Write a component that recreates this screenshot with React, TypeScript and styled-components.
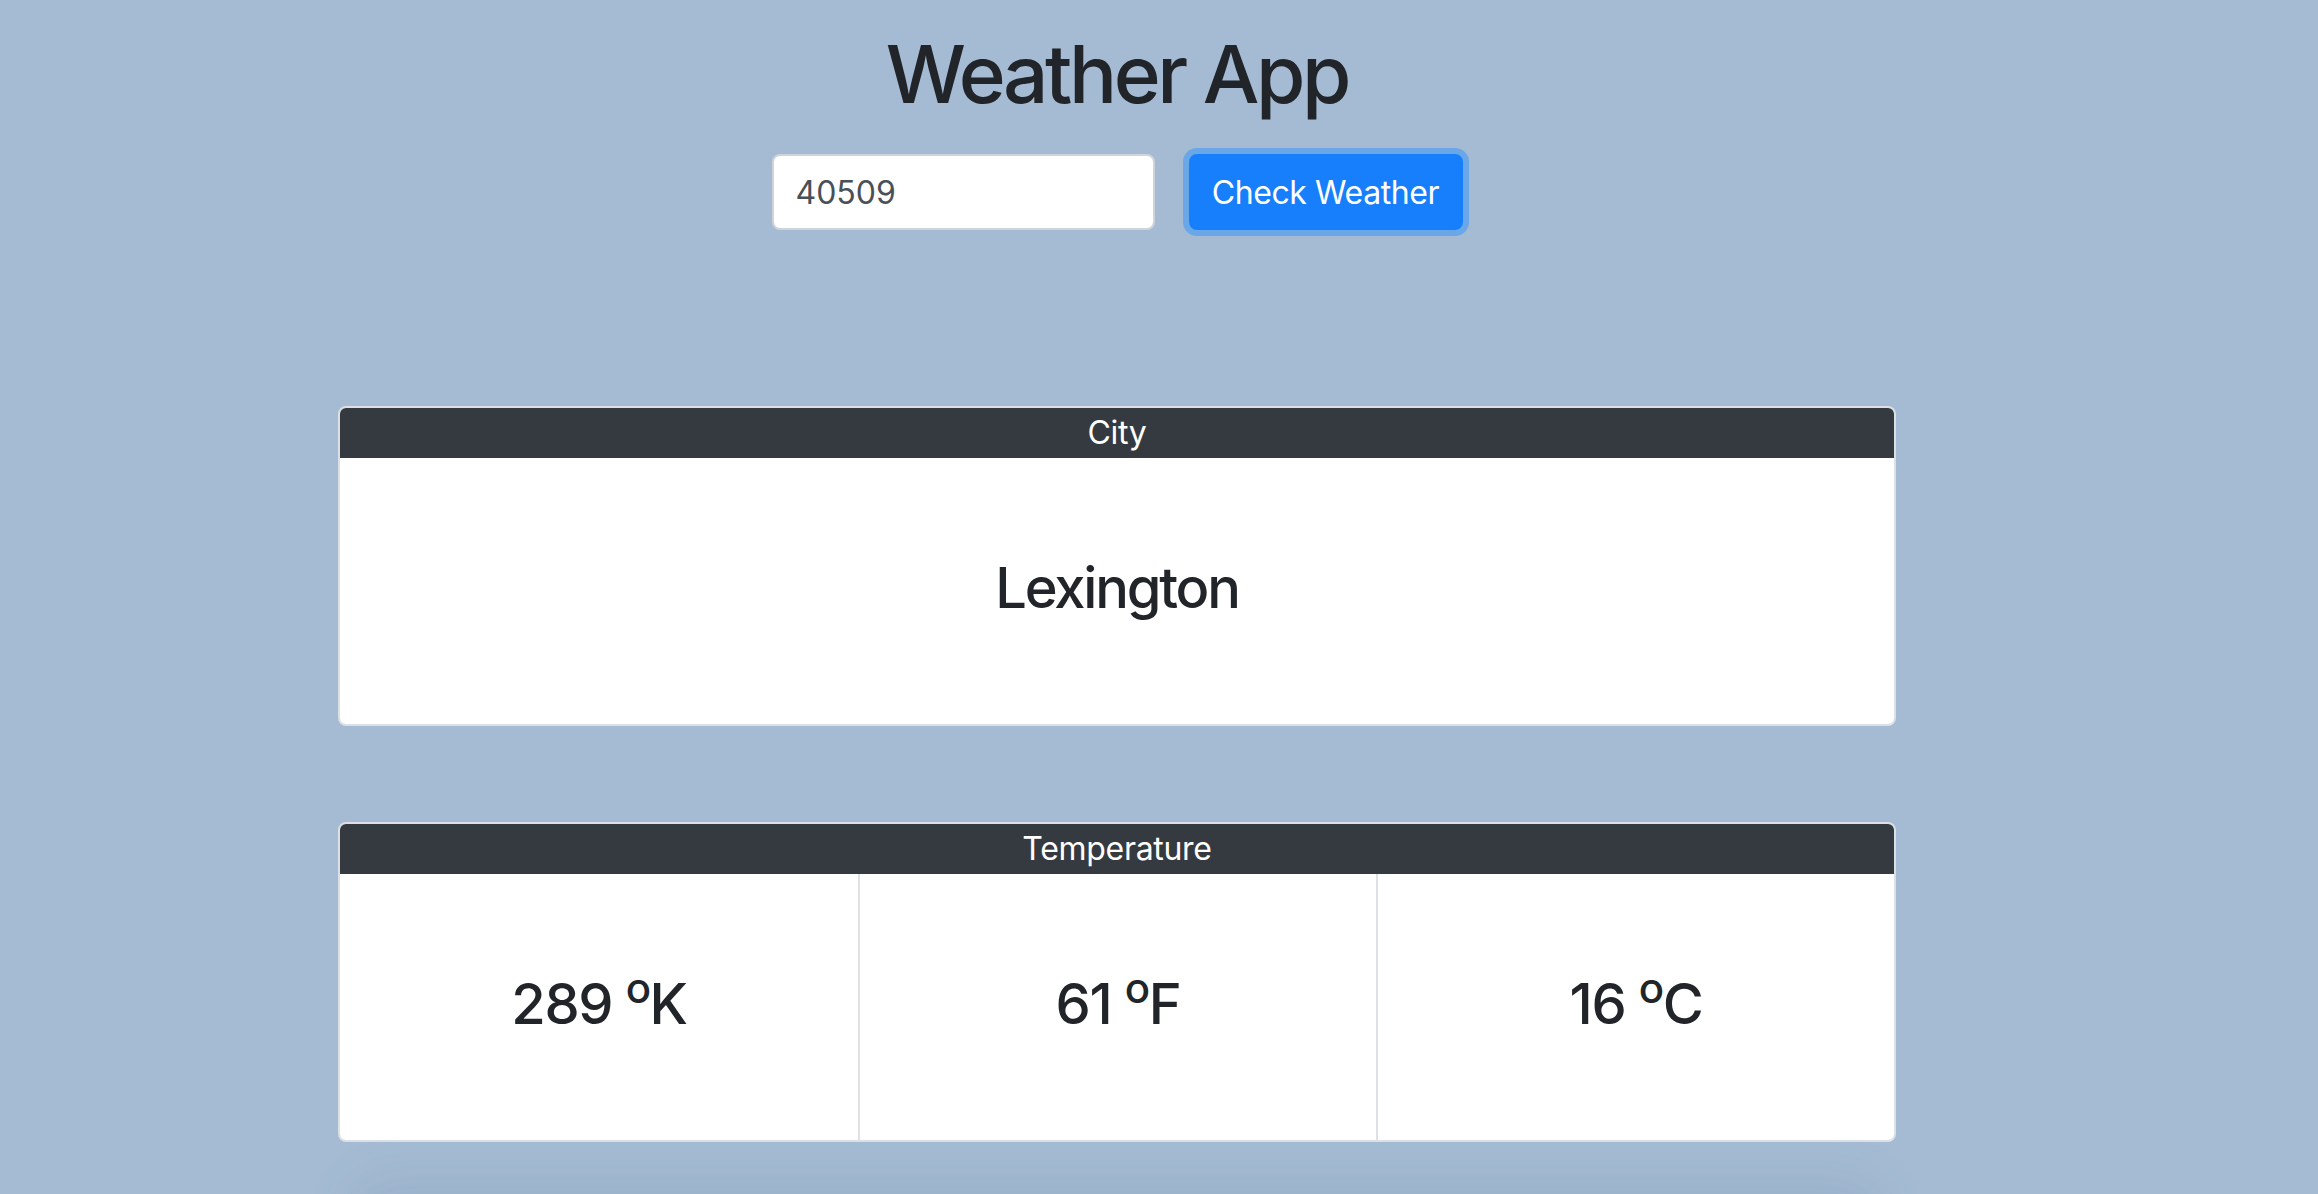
import React from "react";
import styled, { createGlobalStyle } from "styled-components";

const GlobalStyle = createGlobalStyle`
  html, body {
    margin: 0;
    padding: 0;
    overflow: hidden;
    background: #a4bbd3;
  }
  body {
    font-family: Inter, "Noto Sans", "Liberation Sans", sans-serif;
    color: #212529;
  }
  * { box-sizing: border-box; }
`;

const Page = styled.div`
  width: 2234px;
  height: 1194px;
  overflow: hidden;
  padding-top: 26px;
  display: flex;
  flex-direction: column;
  align-items: center;
`;

const Title = styled.h1`
  margin: 0;
  font-size: 80px;
  line-height: 96px;
  font-weight: 500;
  letter-spacing: -3.4px;
  text-align: center;
  color: #212529;
`;

const SearchForm = styled.form`
  margin-top: 32px;
  display: flex;
  align-items: center;
  gap: 34px;
`;

const ZipInput = styled.input`
  width: 383px;
  height: 76px;
  padding: 0 22px;
  border: 2px solid #ced4da;
  border-radius: 8px;
  background: #ffffff;
  font-family: inherit;
  font-size: 32px;
  color: #495057;
  outline: none;
`;

const SubmitButton = styled.button`
  width: 274px;
  height: 76px;
  padding: 0;
  border: 2px solid #177ffb;
  border-radius: 8px;
  background: #177ffb;
  color: #ffffff;
  font-family: inherit;
  font-size: 32px;
  font-weight: 400;
  letter-spacing: -0.4px;
  box-shadow: 0 0 0 6px #6aa7e8;
  cursor: pointer;
`;

const Cards = styled.div`
  margin-top: 176px;
  display: flex;
  flex-direction: column;
  gap: 96px;
`;

const Card = styled.section<{ $shadow?: boolean }>`
  position: relative;
  width: 1558px;
  border: 2px solid #dcdfe3;
  border-radius: 8px;
  background: #ffffff;

  ${(p) =>
    p.$shadow &&
    `
    &::after {
      content: "";
      position: absolute;
      left: 10px;
      right: 10px;
      top: calc(100% + 40px);
      height: 160px;
      background: rgba(50, 80, 120, 0.09);
      border-radius: 40px;
      filter: blur(24px);
      pointer-events: none;
    }
  `}
`;

const CardHeader = styled.header`
  height: 50px;
  line-height: 50px;
  background: #343a40;
  color: #ffffff;
  font-size: 32px;
  font-weight: 400;
  letter-spacing: -0.3px;
  text-align: center;
  border-radius: 6px 6px 0 0;
`;

const CardBody = styled.div`
  height: 266px;
  display: flex;
  align-items: center;
  justify-content: center;
  padding-bottom: 6px;
`;

const TempGrid = styled.div`
  height: 266px;
  display: grid;
  grid-template-columns: repeat(3, 1fr);
`;

const TempCell = styled.div`
  display: flex;
  align-items: center;
  justify-content: center;
  padding-bottom: 6px;
  & + & {
    border-left: 2px solid #dee2e6;
  }
`;

const Value = styled.h3<{ $tracking?: number }>`
  margin: 0;
  font-size: 56px;
  line-height: 67px;
  font-weight: 500;
  letter-spacing: ${(p) => p.$tracking ?? -1.4}px;
  color: #212529;
`;

const Deg = styled.sup`
  position: relative;
  top: -0.5em;
  font-size: 75%;
  line-height: 0;
  vertical-align: baseline;
`;

const temps = [
  { value: 289, unit: "K" },
  { value: 61, unit: "F" },
  { value: 16, unit: "C" },
];

export default function App() {
  return (
    <>
      <GlobalStyle />
      <Page>
        <Title>Weather App</Title>
        <SearchForm onSubmit={(e) => e.preventDefault()}>
          <ZipInput type="text" defaultValue="40509" />
          <SubmitButton type="submit">Check Weather</SubmitButton>
        </SearchForm>
        <Cards>
          <Card>
            <CardHeader>City</CardHeader>
            <CardBody>
              <Value $tracking={-2.2}>Lexington</Value>
            </CardBody>
          </Card>
          <Card $shadow>
            <CardHeader>Temperature</CardHeader>
            <TempGrid>
              {temps.map((t) => (
                <TempCell key={t.unit}>
                  <Value>
                    {t.value} <Deg>o</Deg>
                    {t.unit}
                  </Value>
                </TempCell>
              ))}
            </TempGrid>
          </Card>
        </Cards>
      </Page>
    </>
  );
}
